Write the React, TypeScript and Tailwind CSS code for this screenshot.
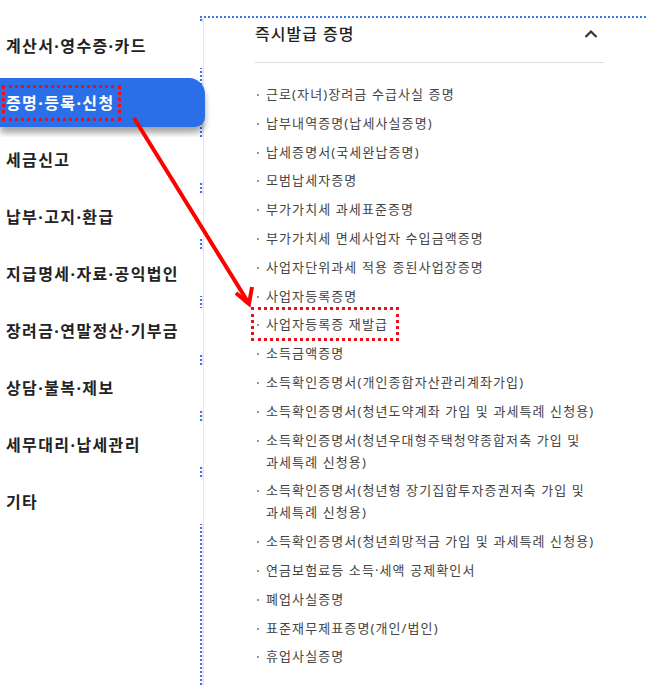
import React from "react";

const menu = [
  "계산서·영수증·카드",
  "증명·등록·신청",
  "세금신고",
  "납부·고지·환급",
  "지급명세·자료·공익법인",
  "장려금·연말정산·기부금",
  "상담·불복·제보",
  "세무대리·납세관리",
  "기타",
];

const items = [
  "근로(자녀)장려금 수급사실 증명",
  "납부내역증명(납세사실증명)",
  "납세증명서(국세완납증명)",
  "모범납세자증명",
  "부가가치세 과세표준증명",
  "부가가치세 면세사업자 수입금액증명",
  "사업자단위과세 적용 종된사업장증명",
  "사업자등록증명",
  "사업자등록증 재발급",
  "소득금액증명",
  "소득확인증명서(개인종합자산관리계좌가입)",
  "소득확인증명서(청년도약계좌 가입 및 과세특례 신청용)",
  "소득확인증명서(청년우대형주택청약종합저축 가입 및 과세특례 신청용)",
  "소득확인증명서(청년형 장기집합투자증권저축 가입 및 과세특례 신청용)",
  "소득확인증명서(청년희망적금 가입 및 과세특례 신청용)",
  "연금보험료등 소득·세액 공제확인서",
  "폐업사실증명",
  "표준재무제표증명(개인/법인)",
  "휴업사실증명",
];

export default function App() {
  return (
    <div className="relative flex w-[646px] h-[685px] overflow-hidden bg-white font-['Noto_Sans','Noto_Sans_CJK_KR',sans-serif]">
      {/* Left menu */}
      <div className="w-[200px] shrink-0 flex flex-col gap-[12px] pt-[23px]">
        {menu.map((m, i) =>
          i === 1 ? (
            <div
              key={m}
              className="relative z-10 w-[205px] h-[49px] -my-[2px] bg-[#2b6fe8] rounded-tr-[16px] rounded-br-[10px] shadow-[0_6px_6px_rgba(0,0,0,0.35)] flex items-center pl-[2px]"
            >
              <span className="inline-block border-[3px] border-dotted border-[#e8101a] pl-[1px] pr-[3px] py-[3px] text-[16px] leading-[24px] font-bold tracking-[1.4px] text-white">
                {m}
              </span>
            </div>
          ) : (
            <div
              key={m}
              className="relative z-10 w-[203px] h-[45px] bg-white flex items-center pl-[6px] text-[16px] leading-[24px] font-bold tracking-[1.4px] text-[#222]"
            >
              {m}
            </div>
          )
        )}
      </div>

      {/* Right panel */}
      <div className="flex-1 flex flex-col pt-[16px]">
        <div className="flex-1 border-t-2 border-l-2 border-dotted border-[#3b74e6]">
          <div className="h-full border-l-2 border-[#e6e6f7] pl-[51px] pr-[42px]">
            <div className="h-[45px] flex items-start justify-between pt-[4px] border-b border-[#dcdce4]">
              <span className="text-[16px] leading-[24px] font-medium tracking-[1px] text-[#222]">즉시발급 증명</span>
              <svg width="16" height="24" viewBox="0 0 16 24" className="mr-[5px]">
                <path d="M2.5 15 L8 9.5 L13.5 15" fill="none" stroke="#333" strokeWidth="2.2" />
              </svg>
            </div>
            <ul className="mt-[20px] pl-[2px] flex flex-col gap-[6.8px]">
              {items.map((t) =>
                t === "사업자등록증 재발급" ? (
                  <li key={t} className="flex">
                    <div className="flex w-fit -ml-[6px] -my-[6px] border-[3px] border-dotted border-[#e8101a] pl-[3px] py-[3px] pr-[8px] text-[13px] leading-[22px] tracking-[1.1px] text-[#444]">
                      <span className="shrink-0 mt-[11px] w-[2px] h-[2px] bg-[#999] mr-[7px]" />
                      <span>{t}</span>
                    </div>
                  </li>
                ) : (
                  <li key={t} className="flex text-[13px] leading-[22px] tracking-[1.1px] text-[#444] break-keep">
                    <span className="shrink-0 mt-[11px] w-[2px] h-[2px] bg-[#999] mr-[7px]" />
                    <span>{t}</span>
                  </li>
                )
              )}
            </ul>
          </div>
        </div>
      </div>

      {/* Annotation arrow */}
      <svg
        className="absolute inset-0 z-20 pointer-events-none"
        width="646"
        height="685"
        viewBox="0 0 646 685"
      >
        <line x1="134" y1="118" x2="248" y2="302" stroke="#f00" strokeWidth="4" />
        <polyline points="236,293 249,304 252,287" fill="none" stroke="#f00" strokeWidth="4" strokeLinejoin="miter" />
      </svg>
    </div>
  );
}
